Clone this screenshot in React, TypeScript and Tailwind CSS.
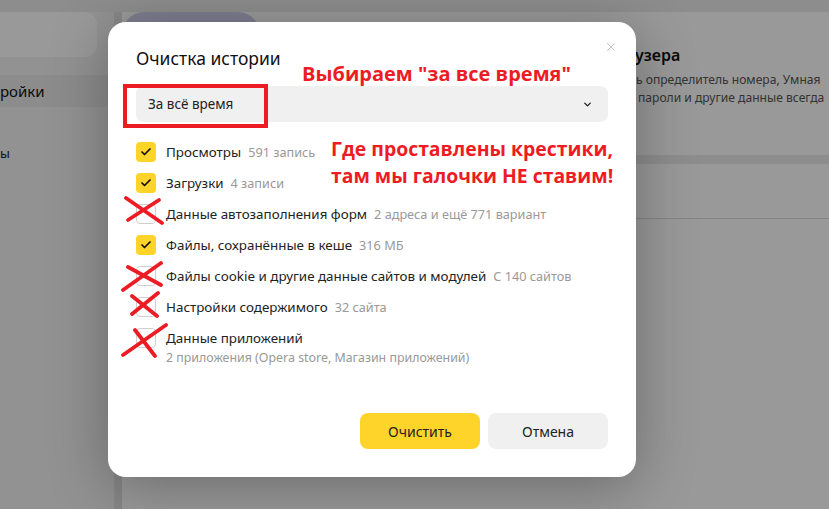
import { Check, ChevronDown, X } from "lucide-react";

type Item = { label: string; hint?: string; sub?: string; checked: boolean };

const items: Item[] = [
  { label: "Просмотры", hint: "591 запись", checked: true },
  { label: "Загрузки", hint: "4 записи", checked: true },
  { label: "Данные автозаполнения форм", hint: "2 адреса и ещё 771 вариант", checked: false },
  { label: "Файлы, сохранённые в кеше", hint: "316 МБ", checked: true },
  { label: "Файлы cookie и другие данные сайтов и модулей", hint: "С 140 сайтов", checked: false },
  { label: "Настройки содержимого", hint: "32 сайта", checked: false },
  { label: "Данные приложений", sub: "2 приложения (Opera store, Магазин приложений)", checked: false },
];

// hand-drawn red crosses over the boxes that stay empty
const crosses = [
  { top: 196, left: 124, w: 40, h: 30, a: [2, 2, 38, 27], b: [35, 4, 4, 24] },
  { top: 260, left: 121, w: 42, h: 32, a: [7, 7, 40, 25], b: [40, 3, 2, 30] },
  { top: 291, left: 130, w: 30, h: 27, a: [2, 5, 27, 25], b: [28, 2, 2, 23] },
  { top: 323, left: 121, w: 47, h: 35, a: [14, 7, 34, 33], b: [45, 2, 2, 32] },
];

function Cross({ c }: { c: (typeof crosses)[number] }) {
  return (
    <svg
      className="absolute pointer-events-none"
      style={{ top: c.top, left: c.left }}
      width={c.w}
      height={c.h}
      viewBox={`0 0 ${c.w} ${c.h}`}
    >
      <g stroke="#ed1c24" strokeWidth="3.8" strokeLinecap="round" fill="none">
        <path d={`M${c.a[0]} ${c.a[1]} L${c.a[2]} ${c.a[3]}`} />
        <path d={`M${c.b[0]} ${c.b[1]} L${c.b[2]} ${c.b[3]}`} />
      </g>
    </svg>
  );
}

function Background() {
  return (
    <div className="flex h-full w-full flex-col bg-white">
      <div className="h-[12px] bg-[#ececec]" />
      <div className="flex flex-1">
        <aside className="flex w-[114px] shrink-0 flex-col bg-[#f4f4f4]">
          <div className="h-[45px] w-[97px] rounded-r-xl bg-white" />
          <div className="mt-[18px] flex h-[32px] items-center bg-[#eaeaea] text-[15px] text-[#111]">
            <span>ройки</span>
          </div>
          <div className="mt-[37px] text-[13px] leading-[18px] text-[#222]">
            <span>ы</span>
          </div>
        </aside>
        <div className="w-[8px] shrink-0 bg-[#e2e2e2]" />
        <main className="flex min-w-0 flex-1 flex-col overflow-hidden">
          <div className="flex">
            <div className="h-[40px] w-[138px] rounded-t-[22px] bg-[#d0d0ee]" />
          </div>
          <div className="flex h-[103px] flex-col pl-[514px]">
            <p className="-mt-[9px] -ml-[30px] text-[16px] font-semibold leading-[24px] text-[#111] whitespace-nowrap">
              браузера
            </p>
            <p className="ml-0 mt-[4px] text-[12.1px] leading-[18px] text-[#555] whitespace-nowrap">
              ь определитель номера, Умная
            </p>
            <p className="ml-[2px] text-[12.1px] leading-[18px] text-[#555] whitespace-nowrap">
              пароли и другие данные всегда
            </p>
          </div>
          <div className="h-[9px] bg-[#ececec]" />
          <div className="h-[55px] border-b border-[#ddd]" />
          <div className="flex-1" />
        </main>
      </div>
    </div>
  );
}

export default function App() {
  return (
    <div
      className="relative h-[509px] w-[829px] overflow-hidden"
      style={{ fontFamily: '"Noto Sans", "Open Sans", sans-serif' }}
    >
      <Background />
      <div className="absolute inset-0 bg-black/40" />

      <div className="absolute left-[108px] top-[22px] flex h-[455px] w-[528px] flex-col rounded-[18px] bg-white px-[28px] pt-[22px] shadow-[0_10px_60px_rgba(0,0,0,0.3)]">
        <div className="flex items-start justify-between">
          <h2 className="text-[17.5px] leading-[28px] text-[#111]">Очистка истории</h2>
          <X className="mr-[-10px] mt-[-4px] h-[14px] w-[14px] text-[#bbb]" strokeWidth={1.5} />
        </div>

        <div className="mt-[14px] flex h-[36px] items-center justify-between rounded-[8px] bg-[#f0f0f0] px-[12px]">
          <span className="text-[13.5px] text-[#222]">За всё время</span>
          <ChevronDown className="mr-[3px] h-[11px] w-[11px] text-[#222]" strokeWidth={3} />
        </div>

        <ul className="mt-[19px] flex flex-col">
          {items.map((it) => (
            <li key={it.label} className="flex min-h-[31px] items-start gap-[10px]">
              {it.checked ? (
                <span className="mt-[1px] flex h-[20px] w-[20px] shrink-0 items-center justify-center rounded-[4px] bg-[#fed42b]">
                  <Check className="h-[12px] w-[12px] text-[#111]" strokeWidth={3.5} />
                </span>
              ) : (
                <span className="mt-[1px] h-[20px] w-[20px] shrink-0 rounded-[4px] border border-[#cfcfcf] bg-white" />
              )}
              <div className="flex flex-col">
                <p className="text-[13.4px] leading-[22px] text-[#222] whitespace-nowrap">
                  {it.label}
                  {it.hint && <span className="ml-[7px] text-[12.7px] text-[#999]">{it.hint}</span>}
                </p>
                {it.sub && <p className="text-[12.4px] leading-[17px] text-[#999]">{it.sub}</p>}
              </div>
            </li>
          ))}
        </ul>

        <div className="mt-auto mb-[28px] flex justify-end gap-[8px]">
          <button className="h-[36px] w-[120px] rounded-[8px] bg-[#fed42b] text-[14px] text-[#222]">Очистить</button>
          <button className="h-[36px] w-[120px] rounded-[8px] bg-[#f0f0f0] text-[14px] text-[#222]">Отмена</button>
        </div>
      </div>

      {/* red callouts */}
      <div className="absolute left-[123px] top-[84px] h-[44px] w-[145px] border-4 border-[#ed1c24]" />
      <p
        className="absolute left-[302px] top-[60px] text-[20px] font-bold leading-[28px] text-[#ed1c24] whitespace-nowrap"
        style={{ fontFamily: '"Open Sans", sans-serif' }}
      >
        Выбираем "за все время"
      </p>
      <p
        className="absolute left-[331px] top-[135px] text-[19.4px] font-bold leading-[27px] text-[#ed1c24] whitespace-nowrap"
        style={{ fontFamily: '"Open Sans", sans-serif' }}
      >
        Где проставлены крестики,
        <br />
        там мы галочки НЕ ставим!
      </p>
      {crosses.map((c) => (
        <Cross key={c.top} c={c} />
      ))}
    </div>
  );
}
